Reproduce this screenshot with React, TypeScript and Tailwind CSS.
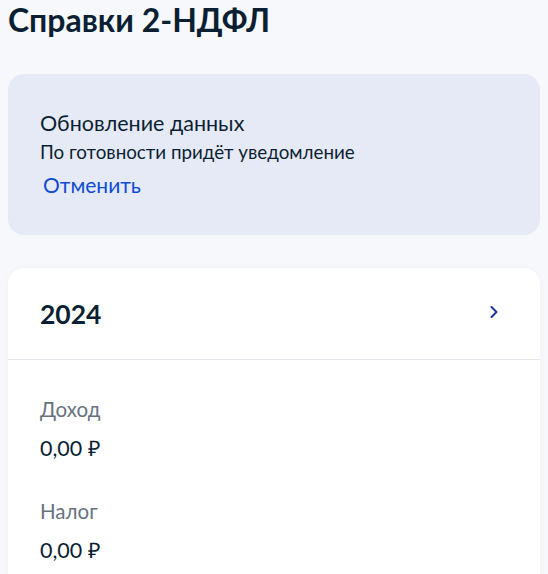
import React from 'react';

const Row = ({ label, value }: { label: string; value: string }) => (
  <div className="flex flex-col gap-[14px]">
    <span className="text-[20.5px] leading-[24px] text-[#66727f]">{label}</span>
    <span className="text-[21.5px] leading-[26px] text-[#0b1f33]">{value}</span>
  </div>
);

export default function App() {
  return (
    <div className="min-h-[574px] bg-[#f6f8fc] px-2 font-['Lato',sans-serif] text-[#0b1f33]">
      {/* Title */}
      <h1 className="pt-[1px] text-[32px] font-bold leading-[38px]">Справки 2-НДФЛ</h1>

      {/* Update banner */}
      <div className="mt-[35px] h-[161px] rounded-[16px] bg-[#e6eaf6] px-8 pt-[36px]">
        <div className="text-[21.5px] leading-[26px]">Обновление данных</div>
        <div className="mt-[4px] text-[18.8px] leading-[24px]">По готовности придёт уведомление</div>
        <button className="mt-[8px] ml-[3px] text-[21px] leading-[26px] text-[#0d4cd3]">Отменить</button>
      </div>

      {/* Year card */}
      <div className="mt-[33px] rounded-t-[16px] bg-white shadow-[0_0_6px_rgba(0,0,0,0.03)]">
        <div className="flex h-[92px] items-center justify-between border-b border-[#e3e6ea] px-8">
          <span className="text-[26.5px] font-bold leading-[32px]">2024</span>
          <svg width="12" height="16" viewBox="0 0 12 16" fill="none" className="mr-[8px] -mt-[4px]">
            <path d="M3.5 3l5 5-5 5" stroke="#1a3593" strokeWidth="2" strokeLinecap="round" strokeLinejoin="round" />
          </svg>
        </div>
        <div className="flex flex-col gap-[38px] px-8 pt-[37px] pb-8">
          <Row label="Доход" value="0,00 ₽" />
          <Row label="Налог" value="0,00 ₽" />
        </div>
      </div>
    </div>
  );
}
